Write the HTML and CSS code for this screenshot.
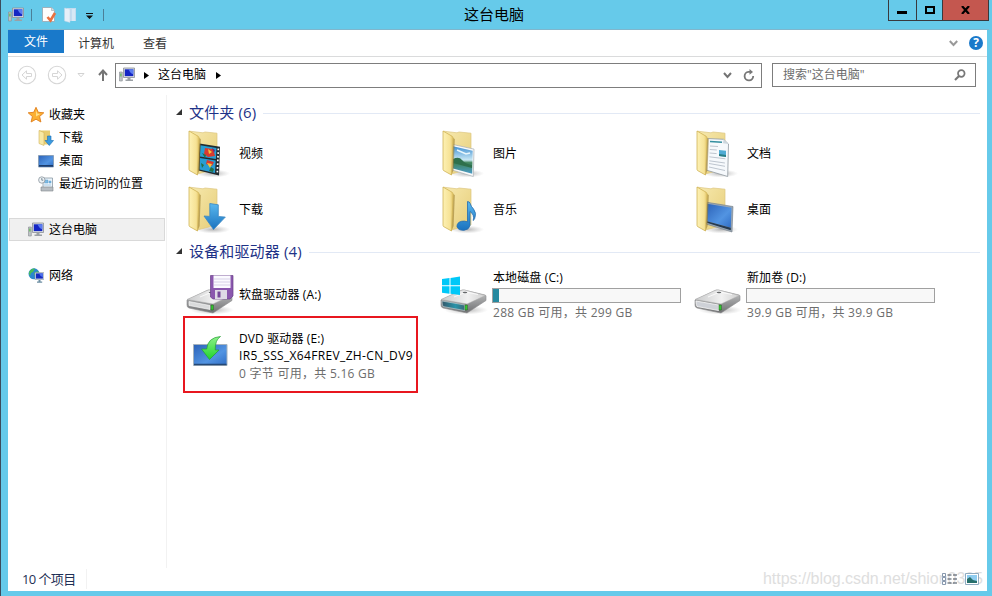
FILE: index.html
```html
<!DOCTYPE html>
<html lang="zh-CN">
<head>
<meta charset="utf-8">
<title>这台电脑</title>
<link rel="stylesheet" href="styles.css">
</head>
<body>
<svg class="defs" width="0" height="0" aria-hidden="true">
  <defs>
    <linearGradient id="gBack" x1="0" y1="0" x2="1" y2="1"><stop offset="0" stop-color="#f7e9ae"/><stop offset="1" stop-color="#e6cd78"/></linearGradient>
    <linearGradient id="gFlap" x1="0" y1="0" x2="1" y2="0"><stop offset="0" stop-color="#fdf1b4"/><stop offset=".7" stop-color="#f6e295"/><stop offset="1" stop-color="#dfc163"/></linearGradient>
    <linearGradient id="gBlue" x1="0" y1="0" x2="1" y2="1"><stop offset="0" stop-color="#2c62b8"/><stop offset=".6" stop-color="#5294e2"/><stop offset="1" stop-color="#2f6cc4"/></linearGradient>
    <linearGradient id="gArrow" x1="0" y1="0" x2="0" y2="1"><stop offset="0" stop-color="#5ab8ee"/><stop offset="1" stop-color="#1a72bf"/></linearGradient>
    <linearGradient id="gGreen" x1="0" y1="0" x2="0" y2="1"><stop offset="0" stop-color="#8df08a"/><stop offset="1" stop-color="#1fd52c"/></linearGradient>
    <linearGradient id="gTop" x1="0" y1="0" x2="1" y2="0"><stop offset="0" stop-color="#c9cacb"/><stop offset=".6" stop-color="#f1f1f1"/><stop offset="1" stop-color="#cfcfcf"/></linearGradient>
    <linearGradient id="gSide" x1="0" y1="0" x2="0" y2="1"><stop offset="0" stop-color="#c6c7c8"/><stop offset="1" stop-color="#6f7072"/></linearGradient>
    <linearGradient id="gFront" x1="0" y1="0" x2="1" y2="0"><stop offset="0" stop-color="#35586a"/><stop offset=".6" stop-color="#2a93a8"/><stop offset="1" stop-color="#3b6a78"/></linearGradient>
    <linearGradient id="gSky" x1="0" y1="0" x2="0" y2="1"><stop offset="0" stop-color="#3f8fd2"/><stop offset=".5" stop-color="#c9e8f5"/><stop offset=".6" stop-color="#3f8458"/><stop offset="1" stop-color="#4a9bc8"/></linearGradient>
    <radialGradient id="gShadow"><stop offset="0" stop-color="#777" stop-opacity=".55"/><stop offset="1" stop-color="#999" stop-opacity="0"/></radialGradient>
    <symbol id="folder" viewBox="0 0 48 48">
      <ellipse cx="26" cy="43.500" rx="17" ry="4" fill="url(#gShadow)"/>
      <path d="M2.500 1.200 16 2.800l2-.8 12 1.200V39L10 44z" fill="url(#gBack)" stroke="#dcc67f" stroke-width=".7"/>
    </symbol>
    <symbol id="flap" viewBox="0 0 48 48">
      <path d="M12 8l1.800 1-1.200 31-2.100 5z" fill="#9b7d2f" opacity=".6"/>
      <path d="M2 1l9 5.200q1.200.9 1.200 2.600L10.500 45 2.500 40.500Q2 40 2 39z" fill="url(#gFlap)" stroke="#cfb356" stroke-width=".8"/>
    </symbol>
    <symbol id="drive" viewBox="0 0 48 48">
      <ellipse cx="26" cy="39" rx="22" ry="4.500" fill="url(#gShadow)"/>
      <path d="M1 29 21 19.500q1.500-.7 3.500-.4L45 24q1.500.5 1 2v3.500L27 42 3 37q-2-.5-2-3z" fill="url(#gSide)" stroke="#8b8c8d" stroke-width=".6"/>
      <path d="M1 28.500 21 19.500q1.500-.7 3.500-.4L45.500 24.500 27 33z" fill="url(#gTop)" stroke="#aaa" stroke-width=".5"/>
      <path d="M14 26l12-5 12 2.500" fill="none" stroke="#fff" stroke-width=".8"/>
      <ellipse cx="25" cy="21.500" rx="2.300" ry=".8" fill="#66686a"/>
    </symbol>
    <symbol id="pc" viewBox="0 0 16 16">
      <path d="M4.500 1h11v9.500h-11z" fill="#d5d9df" stroke="#8a9097" stroke-width=".8"/>
      <path d="M5.800 2.300h8.500v6.800H5.800z" fill="#1426c4"/><path d="M9.500 2.300h4.800v5q-3-.5-4.800-5z" fill="#5b7cf0"/>
      <path d="M8.500 11h3v1.500h2.500V14H6.500v-1.500h2z" fill="#9ba0a5"/>
      <path d="M.5 5h2.800v9H.5z" fill="#bfc3c7" stroke="#84898e" stroke-width=".6"/><path d="M1.300 6.500h1.200v3H1.300z" fill="#58bd4b"/>
    </symbol>
  </defs>
</svg>

<div class="window">
  <header class="titlebar">
    <div class="quick">
      <svg class="q-pc" width="16" height="16"><use href="#pc"/></svg>
      <i class="sep"></i>
      <svg class="q-prop" width="16" height="17" viewBox="0 0 16 17"><path d="M1.500 1.500h9l3 3v11h-12z" fill="#fdfdfd" stroke="#9aa5ad" stroke-width=".8"/><path d="M10.500 1.500v3h3" fill="#d9dee2" stroke="#9aa5ad" stroke-width=".6"/><path d="M6.500 11l3 3.500L14 7" fill="none" stroke="#e9713f" stroke-width="2.600"/></svg>
      <svg class="q-new" width="13" height="16" viewBox="0 0 13 16"><path d="M3 1h9v13H3z" fill="#c3dcf0"/><path d="M.5 1 6 2v13.500L.5 14z" fill="#e6eff8" stroke="#bdd3e6" stroke-width=".5"/><path d="M8 2h3v12H8z" fill="#d8e8f5"/></svg>
      <svg class="q-more" width="7" height="6" viewBox="0 0 7 6"><path d="M0 0h7v1H0zM0 2.500h7L3.500 6z" fill="#111"/></svg>
      <i class="sep"></i>
    </div>
    <h1 class="title">这台电脑</h1>
    <div class="controls">
      <button class="ctl min" aria-label="最小化"><svg width="10" height="3"><path d="M0 0h10v3H0z"/></svg></button>
      <button class="ctl max" aria-label="最大化"><svg width="10" height="8"><path d="M1 1h8v6H1z" fill="none" stroke="#000" stroke-width="2"/></svg></button>
      <button class="ctl close" aria-label="关闭"><svg width="9" height="8" viewBox="0 0 9 8"><path d="M1 0l7 8M8 0L1 8" stroke="#000" stroke-width="2.200"/></svg></button>
    </div>
  </header>

  <div class="client">
    <nav class="ribbon">
      <span class="tab active">文件</span><span class="tab">计算机</span><span class="tab view">查看</span>
      <svg class="expand" width="9" height="7" viewBox="0 0 9 7"><path d="M.8 1l3.700 4L8.200 1" fill="none" stroke="#999" stroke-width="2"/></svg>
      <span class="help">?</span>
    </nav>

    <div class="addressbar">
      <svg class="navbtn" width="20" height="20" viewBox="0 0 20 20"><g fill="none" stroke="#d6d6d6"><circle cx="10" cy="10" r="8.700" stroke-width="1.100"/><path d="M5 10l4.500-4.200v2.700H14.500v3H9.500v2.700z"/></g></svg>
      <svg class="navbtn fwd" width="20" height="20" viewBox="0 0 20 20"><g fill="none" stroke="#d6d6d6"><circle cx="10" cy="10" r="8.700" stroke-width="1.100"/><path d="M15 10l-4.500-4.200v2.700H5.500v3H10.500v2.700z"/></g></svg>
      <svg class="recent" width="8" height="5" viewBox="0 0 8 5"><path d="M1 .5h6L4 3.800z" fill="#fff" stroke="#d2d2d2"/></svg>
      <svg class="up" width="10" height="12" viewBox="0 0 10 12"><path d="M5 12V2M1 6l4-4.500L9 6" fill="none" stroke="#747474" stroke-width="2"/></svg>
      <div class="path">
        <svg width="16" height="16"><use href="#pc"/></svg>
        <svg class="crumb" width="5" height="7"><path d="M0 0l5 3.500L0 7z"/></svg>
        <span>这台电脑</span>
        <svg class="crumb last" width="5" height="7"><path d="M0 0l5 3.500L0 7z"/></svg>
        <svg class="drop" width="9" height="7" viewBox="0 0 9 7"><path d="M1 1l3.500 4L8 1" fill="none" stroke="#747474" stroke-width="2"/></svg>
        <svg class="refresh" width="12" height="13" viewBox="0 0 12 13"><path d="M7 2.800H5.500A4.300 4.300 0 1 0 10.200 7" fill="none" stroke="#777" stroke-width="1.800"/><path d="M6.500 0v5.700L10 3z" fill="#777"/></svg>
      </div>
      <div class="search"><span>搜索"这台电脑"</span><svg width="12" height="12" viewBox="0 0 12 12"><circle cx="7.300" cy="4.500" r="3.300" fill="none" stroke="#777" stroke-width="1.700"/><path d="M5 7l-4 4" stroke="#777" stroke-width="2.200"/></svg></div>
    </div>

    <div class="body">
      <aside class="tree">
        <div class="node"><svg width="16" height="16" viewBox="0 0 16 16"><path d="M8 .3l2.300 5 5.500.5-4.200 3.700 1.300 5.500L8 12.200l-4.900 2.800 1.300-5.500L.2 5.800l5.500-.5z" fill="#fbb032" stroke="#e07f1c" stroke-width=".9"/><path d="M8 3l1.200 3.600 3 .4L8 9.500z" fill="#ffe08a"/></svg>收藏夹</div>
        <div class="node sub"><svg width="16" height="16" viewBox="0 0 16 16"><path d="M1 .5h11v14H4z" fill="#e8cd72"/><path d="M1 .5l5 2v13l-5-2z" fill="#f8e9a5" stroke="#d2b45a" stroke-width=".6"/><path d="M9.500 6h3.500v4.500h2.500L11.300 15.500 7 10.500h2.500z" fill="#3b9be0" stroke="#1a6fb6" stroke-width=".6"/></svg>下载</div>
        <div class="node sub"><svg width="16" height="16" viewBox="0 0 16 16"><path d="M.5 2.500h15v11.500H.5z" fill="url(#gBlue)" stroke="#8398ad" stroke-width=".8"/><path d="M1 12h14v1.700H1z" fill="#1c3c6c"/></svg>桌面</div>
        <div class="node sub"><svg width="16" height="16" viewBox="0 0 16 16"><path d="M5 2h9.500v10H5z" fill="#e9f3fa" stroke="#8c99a5" stroke-width=".8"/><path d="M6.500 4H10v3H6.500zM11 5h2v2h-2zM6 9h7" fill="#7ebbe3" stroke="#5194c5" stroke-width=".4"/><path d="M3 11h12v4H3z" fill="#b7bdc2" stroke="#7f868c" stroke-width=".6"/><circle cx="3.800" cy="4" r="3.200" fill="#eef3f6" stroke="#8b969e" stroke-width=".8"/><path d="M3.800 2v2.200h1.500" fill="none" stroke="#4f6573" stroke-width=".7"/></svg>最近访问的位置</div>
        <div class="node gap selected"><svg width="16" height="16"><use href="#pc"/></svg>这台电脑</div>
        <div class="node gap"><svg width="16" height="16" viewBox="0 0 16 16"><circle cx="6" cy="5.800" r="5.500" fill="#2a86cf"/><path d="M2 2.500q2-2.500 5-2L5 4 3 5 2 8Q0 5 2 2.500zM6 5l4-2 1 3-4 2z" fill="#46bc5a"/><path d="M7 4.500h8.800v7H7z" fill="#d8e0e8" stroke="#7f8b96" stroke-width=".5"/><path d="M7.900 5.400h7v5.200h-7z" fill="#152bc0"/><path d="M11 5.400h3.900v3.800q-2.500-.5-3.900-3.800z" fill="#4d72ed"/><path d="M10.500 12h2v1.500h1.700v1.200H9v-1.200h1.500z" fill="#6d8fa3"/></svg>网络</div>
      </aside>

      <main class="content">
        <section>
          <h2><svg width="6" height="6"><path d="M6 0v6H0z" fill="#333"/></svg><span>文件夹 (6)</span></h2>
          <div class="grid folders">
            <div class="item"><svg width="48" height="48" viewBox="0 0 48 48"><use href="#folder"/><path d="M12.500 13.500l20.500 3.300-1 28.700-20.500-5z" fill="#222b30"/><path d="M13.500 15.300l16 2.600-.6 11-16-2.400zM13 28l15.700 2.400-.7 12.600-15.500-3.600z" fill="#279dd3"/><path d="M18 18l8 1 2 7-7 1-4-3zM20 30l7 2-2 4-6-2z" fill="#d93a2f"/><path d="M21 19l4 3-3 2zM20 33l5 1-2 4z" fill="#f3c53a"/><path d="M15 23l4 2-1 3zM24 37l3 2-1 3-4-1zM14 33l3 2-2 3z" fill="#237046"/><path d="M25 18l3 2-1 3z" fill="#702a7a"/><path d="M31.300 18.500L30.300 44" stroke="#fff" stroke-width="1.700" stroke-dasharray="1.700 2"/><use href="#flap"/></svg><span>视频</span></div>
            <div class="item"><svg width="48" height="48" viewBox="0 0 48 48"><use href="#folder"/><path d="M12 14.500l21 4.600-.7 27.400L11 40z" fill="#fafafa" stroke="#a7afb5" stroke-width=".7"/><path d="M12 16.300l19.700 4.500-.5 22.900L12 38.500z" fill="url(#gSky)"/><path d="M12 29q6-3 9 1t10 5v3l-19-5z" fill="#2f704c"/><path d="M16 20l9 4 4-1" stroke="#e8f6fc" stroke-width="1.600" fill="none"/><use href="#flap"/></svg><span>图片</span></div>
            <div class="item"><svg width="48" height="48" viewBox="0 0 48 48"><use href="#folder"/><path d="M12.500 8.500l16 .8 5 4.700-.8 32.500L11 40z" fill="#f6f9fc" stroke="#8f989f" stroke-width=".8"/><path d="M28.500 9.300l-.5 4 5.500.7z" fill="#cdd7df"/><path d="M15 11.500l12 .8" stroke="#348fa0" stroke-width="1.400"/><path d="M15 16l8 .5m-8.200 3l7 .5m-7.200 3l7 .6m-7.200 3.200l16 2m-16 2l15.500 2.200M14 33.500l16 2.800m-16 .7l16 3.500" stroke="#aeb7c3" stroke-width=".8"/><path d="M24 20l7 .8v6l-7-.8z" fill="#4fabd4"/><path d="M24 24l7 1v2l-7-1z" fill="#297d83"/><use href="#flap"/></svg><span>文档</span></div>
            <div class="item"><svg width="48" height="48" viewBox="0 0 48 48"><use href="#folder"/><use href="#flap"/><path d="M22.800 17.500l8.500 1.300v11.700l7 .6L26.500 43.500 17 30l5.800.4z" fill="url(#gArrow)" stroke="#3b87c0" stroke-width=".8"/></svg><span>下载</span></div>
            <div class="item"><svg width="48" height="48" viewBox="0 0 48 48"><use href="#folder"/><use href="#flap"/><path d="M26.500 15.500q2 0 2.700 2 .8 3 3.300 5.500 3.500 4 1.200 9.500-.5 1.300-1.500 2 1.500-6-3.200-9v14q-1 4.300-6 4.800-5.500.3-7-3.500-.3-4.300 4.500-5.500 3-.6 6 .5z" fill="url(#gArrow)" stroke="#246cae" stroke-width=".8"/></svg><span>音乐</span></div>
            <div class="item"><svg width="48" height="48" viewBox="0 0 48 48"><use href="#folder"/><path d="M12 16.300l26 4.200-1 25.500-26-8z" fill="#9aa7b4" stroke="#6f7a84" stroke-width=".6"/><path d="M12 17.700l24.500 4.100-.7 20L12 35.200z" fill="url(#gBlue)"/><path d="M12 35.200l23.800 6.600v2.500L11.800 36.700z" fill="#263a50"/><use href="#flap"/></svg><span>桌面</span></div>
          </div>
        </section>

        <section>
          <h2><svg width="6" height="6"><path d="M6 0v6H0z" fill="#333"/></svg><span>设备和驱动器 (4)</span></h2>
          <div class="grid drives">
            <div class="item"><svg width="48" height="48" viewBox="0 0 48 48"><use href="#drive"/><path d="M3 30.500l21 4v4l-21-4z" fill="#d9dadb" stroke="#fff" stroke-width=".6"/><path d="M25 34h2.300v5H25z" fill="#35d332" stroke="#275f24" stroke-width=".6"/><path d="M24.500 4.500H47V25l-3 3H27l-2.500-2z" fill="#8a57ae" stroke="#694087" stroke-width=".7"/><path d="M27.500 4.500h17v12.500h-17z" fill="#fbfaff"/><path d="M28 8h16m-16 3h16m-16 3h16" stroke="#cfc6e1" stroke-width=".8"/><path d="M29 19h12v9H29z" fill="#ded9e6"/><path d="M31.500 20.500h3v6h-3z" fill="#76489b"/></svg><span class="name">软盘驱动器 (A:)</span></div>
            <div class="item"><svg width="48" height="48" viewBox="0 0 48 48"><use href="#drive"/><path d="M2 30l22.500 4v5.500L3 35.500q-1-2-1-5.500z" fill="url(#gFront)" stroke="#c5d5d8" stroke-width=".6"/><path d="M25 34h2.300v5H25z" fill="#35d332" stroke="#275f24" stroke-width=".6"/><path d="M2 8l7.500-1v7.300H2zM10.500 6.900L20 5.500v8.800h-9.500zM2 15.300h7.500v7.400L2 21.700zM10.500 15.300H20V24l-9.500-1.200z" fill="#00c8f8"/></svg><div class="meta"><div class="name">本地磁盘 (C:)</div><div class="bar"><i class="fill"></i></div><div class="dim">288 GB 可用，共 299 GB</div></div></div>
            <div class="item"><svg width="48" height="48" viewBox="0 0 48 48"><use href="#drive"/><path d="M2 30l22.500 4v5.500L3 35.500q-1-2-1-5.500z" fill="#ced1d7" stroke="#f7f7f7" stroke-width=".8"/><path d="M25 34h2.300v5H25z" fill="#35d332" stroke="#275f24" stroke-width=".6"/></svg><div class="meta"><div class="name">新加卷 (D:)</div><div class="bar"></div><div class="dim">39.9 GB 可用，共 39.9 GB</div></div></div>
            <div class="item marked"><svg width="48" height="48" viewBox="0 0 48 48"><path d="M7.500 15.500h33.500v21H7.500z" fill="url(#gBlue)" stroke="#a4b2bd"/><path d="M8 34.700h32.500v1.500H8z" fill="#254875"/><path d="M34.500 7.500q-5.500 3.500-5.300 13.500H33L23.500 30.500 15.500 20h5.200q1-11.500 13.800-12.500z" fill="url(#gGreen)" stroke="#249e32" stroke-width=".7"/></svg><div class="meta dvd"><div class="name">DVD 驱动器 (E:)</div><div class="label">IR5_SSS_X64FREV_ZH-CN_DV9</div><div class="dim">0 字节 可用，共 5.16 GB</div></div></div>
          </div>
        </section>
      </main>
    </div>

    <footer class="status">
      <span class="count">10 个项目</span>
      <span class="watermark">https://blog.csdn.net/shion0305</span>
      <svg class="details" width="16" height="12" viewBox="0 0 16 12"><g fill="#fff" stroke="#6b7f99" stroke-width=".8"><path d="M.5.500h3v3h-3zM.5 4.500h3v3h-3zM.5 8.500h3v3h-3z"/></g><path d="M5.500 2h4m1.500 0h4M5.500 6h4m1.500 0h4M5.500 10h4m1.500 0h4" stroke="#3d4652"/></svg>
      <svg class="tiles" width="14" height="12" viewBox="0 0 14 12"><path d="M.5.500h13v11H.5z" fill="#fff" stroke="#8fabc0"/><path d="M2 2h10v8H2z" fill="#8fcdf0"/><path d="M2 6l3-2 3 3 4 1v2H2z" fill="#28706c"/></svg>
    </footer>
  </div>
</div>
</body>
</html>
```
FILE: styles.css
```css
*, *::before, *::after { box-sizing: border-box; }
html, body { margin: 0; height: 100%; overflow: hidden; }
body { font: 12px/17px "Open Sans", "Noto Sans CJK SC", sans-serif; color: #000; }
.defs { position: absolute; }
svg { flex: none; display: block; }
h1, h2 { margin: 0; font-weight: 400; }

.window { width: 992px; height: 596px; background: #66caea; border-left: 1px solid #3c4c5c; padding: 0 5px 5px 7px; display: flex; flex-direction: column; }
.titlebar { height: 30px; flex: none; display: grid; grid-template-columns: 1fr auto 1fr; border-bottom: 1px solid #80b6cc; margin-right: -2px; }
.quick { display: flex; align-items: center; height: 29px; }
.sep { width: 1px; height: 12px; background: #4b7f98; }
.q-pc { margin-right: 7px; }
.q-prop { margin-left: 9px; }
.q-new { margin-left: 7px; }
.q-more { margin: 3px 10px 0 9px; width: 7px; }
.title { font-size: 15px; line-height: 28px; margin-right: 9px; }
.controls { display: flex; justify-content: flex-end; height: 21px; }
.ctl { border: 1px solid #39393d; border-top: 0; border-right: 0; padding: 0; background: transparent; display: flex; align-items: center; justify-content: center; }
.min { width: 28px; padding-top: 5px; padding-right: 2px; }
.max { width: 26px; }
.close { width: 47px; background: #c4574f; border-right: 1px solid #39393d; }

.client { flex: 1; min-height: 0; background: #fff; display: flex; flex-direction: column; }
.ribbon { height: 27px; flex: none; border-bottom: 1px solid #dadbdc; display: flex; color: #333; line-height: 27px; }
.tab.active { width: 56px; height: 23px; line-height: 24px; background: #1979ca; color: #fff; text-align: center; }
.tab + .tab { margin-left: 14px; }
.tab + .tab.view { margin-left: 29px; }
.expand { margin: 10px 11px 0 auto; }
.help { width: 14px; height: 14px; margin: 6px 4px 0 0; border-radius: 50%; background: #1979ca; color: #fff; font-weight: 700; line-height: 14px; text-align: center; }

.addressbar { height: 38px; flex: none; display: flex; align-items: center; padding: 0 11px 2px 9px; }
.fwd { margin-left: 10px; }
.recent { margin-left: 10px; }
.up { margin-left: 13px; }
.path { margin-left: 7px; width: 647px; height: 25px; border: 1px solid #7d7d7d; display: flex; align-items: center; padding: 0 6px 0 3px; line-height: 22px; }
.crumb { margin: 0 9px; }
.crumb.last { margin-left: 10px; }
.drop { margin-left: auto; margin-right: 11px; }
.search { margin-left: auto; width: 204px; height: 24px; border: 1px solid #7d7d7d; display: flex; align-items: center; justify-content: space-between; padding: 0 9px 0 10px; color: #6d6d6d; line-height: 22px; }

.body { flex: 1; min-height: 0; display: flex; }
.tree { width: 159px; flex: none; border-right: 1px solid #f2f2f2; padding: 8px 1px 0 1px; }
.node { height: 23px; display: flex; align-items: center; gap: 5px; border: 1px solid transparent; padding-left: 18px; }
.node.sub { padding-left: 28px; }
.node.gap { margin-top: 23px; }
.selected { background: #f0f0f0; border-color: #d9d9d9; }

.content { flex: 1; padding: 6px 7px 0 9px; }
h2 { display: flex; align-items: center; height: 25px; font-size: 15px; line-height: 20px; color: #1e3287; }
h2 span { margin: -4px 7px 0 7px; letter-spacing: .15px; }
h2 svg { margin-top: -3px; }
h2::after { content: ""; height: 1px; flex: 1; background: #e2e9f5; }
.grid { display: grid; grid-template-columns: repeat(3, 254px); }
.folders { grid-auto-rows: 56px; padding: 0 0 0 11px; height: 114px; }
.drives { grid-auto-rows: 58px; padding: 2px 0 0 10px; }
.item { display: flex; align-items: center; position: relative; height: 56px; }
.folders .item > span { margin: -2px 0 0 4px; }
.drives .item > span { margin: -2px 0 0 5px; }
.name { letter-spacing: .12px; }
.meta { margin: 0 0 0 5px; width: 189px; line-height: 18px; white-space: nowrap; }
.bar { width: 189px; height: 15px; margin: 1px 0 0 -1px; border: 1px solid #a0a0a0; background: #f8f8f8; }
.bar + .dim { padding-top: 1px; }
.fill { display: block; width: 6px; height: 13px; background: #26899f; }
.dim { color: #6d6d6d; letter-spacing: .27px; }
.dvd { margin-top: 6px; line-height: 17.500px; }
.label { letter-spacing: .34px; }
.marked::before { content: ""; position: absolute; left: -3px; top: -9px; width: 235px; height: 77px; border: 2px solid #e8171f; }

.status { height: 23px; flex: none; display: flex; align-items: center; padding: 0 8px 2px 14px; }
.count { font-size: 13px; color: #1e2f55; line-height: 20px; padding-right: 10px; border-right: 1px solid #f2f2f2; letter-spacing: -.6px; }
.watermark { margin-left: auto; width: 179px; font: 16px/20px "Liberation Sans", sans-serif; letter-spacing: -.05px; color: #dedede; white-space: nowrap; }
.tiles { margin-left: 7px; }
```
